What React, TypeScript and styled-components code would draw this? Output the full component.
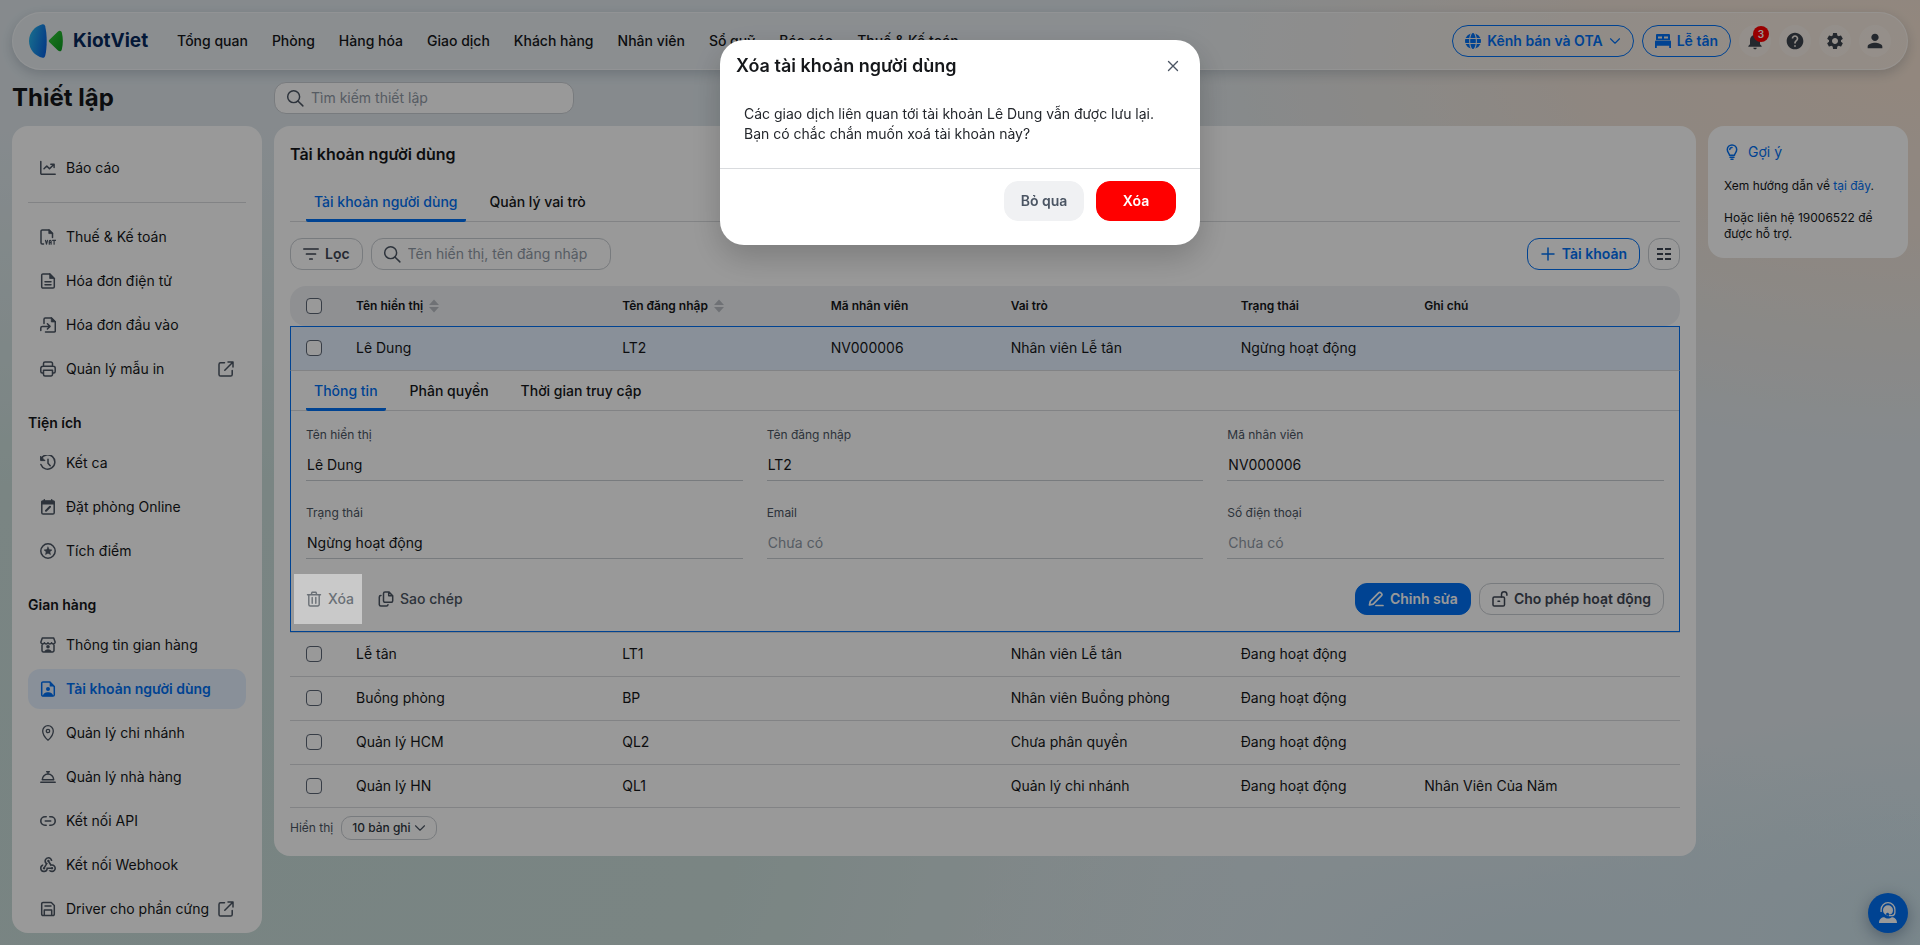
import React from "react";
import styled, { createGlobalStyle, css } from "styled-components";
import { MdHelp, MdNotifications, MdPerson, MdSettings, MdWebhook } from "react-icons/md";

const c = {
  blue: "#0070f4",
  blueSoft: "#e5f1ff",
  ink: "#15171a",
  body: "#4b5563",
  muted: "#9099a5",
  line: "#d9dbde",
  red: "#ff0000",
};

const GlobalStyle = createGlobalStyle`
  *, *::before, *::after { box-sizing: border-box; }
  body {
    margin: 0;
    font-family: Inter, "Noto Sans", sans-serif;
    font-size: 14px;
    line-height: 20px;
    color: ${c.ink};
    background-color: #dfe7ec;
    background-image:
      radial-gradient(ellipse 40% 42% at 100% 6%, #f4e2d2 0%, rgba(240, 225, 212, 0.85) 45%, rgba(228, 232, 233, 0) 100%),
      radial-gradient(ellipse 30% 22% at 80% 100%, #cfe1e8 0%, rgba(207, 225, 232, 0) 100%),
      radial-gradient(ellipse 22% 25% at 100% 100%, #c8e0e9 0%, rgba(200, 224, 233, 0) 100%),
      radial-gradient(ellipse 60% 75% at 8% 88%, #c9ddd9 0%, rgba(201, 221, 217, 0.9) 50%, rgba(223, 231, 236, 0) 100%);
    background-attachment: fixed;
  }
  button, input, select { font: inherit; color: inherit; }
  button { cursor: pointer; }
  h1, h2, h3, p { margin: 0; }
  svg { display: block; flex: none; }
`;

const Page = styled.div`
  display: flex;
  flex-direction: column;
  min-height: 100vh;
  padding: 12px;
`;

/* ---------- header ---------- */

const Header = styled.header`
  display: flex;
  align-items: center;
  height: 58px;
  padding: 0 16px;
  border: 1px solid rgba(255, 255, 255, 0.5);
  border-radius: 29px;
  background: rgba(255, 255, 255, 0.28);
  box-shadow: 0 4px 12px rgba(30, 50, 70, 0.2);
`;

const Brand = styled.a`
  display: flex;
  align-items: center;
  gap: 10px;
  margin-right: 17px;
  color: #06285c;
  font-size: 19px;
  font-weight: 700;
  text-decoration: none;
`;

const Nav = styled.nav`
  display: flex;
  flex: 1;
`;

const NavLink = styled.a`
  padding: 8px 12px;
  color: ${c.ink};
  font-weight: 500;
  text-decoration: none;
  white-space: nowrap;
`;

const HeaderActions = styled.div`
  display: flex;
  gap: 8px;
`;

const PillButton = styled.button`
  display: flex;
  align-items: center;
  gap: 6px;
  height: 32px;
  padding: 0 12px;
  border: 1px solid ${c.blue};
  border-radius: 16px;
  background: transparent;
  color: ${c.blue};
  font-weight: 600;
  white-space: nowrap;
`;

const RoundButton = styled.button`
  position: relative;
  display: flex;
  align-items: center;
  justify-content: center;
  width: 32px;
  height: 32px;
  padding: 0;
  border: 0;
  border-radius: 50%;
  background: rgba(255, 255, 255, 0.25);
  color: #3c434d;
`;

const Badge = styled.span`
  position: absolute;
  top: 1px;
  right: 2px;
  min-width: 16px;
  height: 16px;
  border-radius: 8px;
  background: ${c.red};
  color: #fff;
  font-size: 10px;
  font-weight: 600;
  line-height: 16px;
  text-align: center;
`;

/* ---------- page grid ---------- */

const Columns = styled.div`
  display: grid;
  grid-template-columns: 250px minmax(0, 1fr) 200px;
  column-gap: 12px;
  align-items: start;
`;

const TitleRow = styled(Columns)`
  align-items: center;
  height: 56px;
`;

const PageTitle = styled.h1`
  font-size: 24px;
  line-height: 32px;
  font-weight: 700;
`;

const SearchBox = styled.label<{ $width: number }>`
  display: flex;
  align-items: center;
  gap: 7px;
  width: ${(p) => p.$width}px;
  height: 32px;
  padding: 0 11px;
  border: 1px solid #c9cdd2;
  border-radius: 12px;
  background: #fff;
  color: ${c.body};

  input {
    flex: 1;
    min-width: 0;
    padding: 0;
    border: 0;
    outline: 0;
    background: none;
    color: ${c.ink};
  }
  input::placeholder { color: ${c.muted}; opacity: 1; }
`;

const Card = styled.section`
  border-radius: 16px;
  background: #fff;
`;

/* ---------- sidebar ---------- */

const Sidebar = styled(Card).attrs({ as: "aside" })`
  padding: 22px 16px 4px;
`;

const MenuGroup = styled.ul<{ $divided?: boolean }>`
  display: flex;
  flex-direction: column;
  gap: 4px;
  margin: 0;
  padding: 0;
  list-style: none;
  ${(p) =>
    p.$divided &&
    css`
      margin-top: 14px;
      padding-top: 14px;
      border-top: 1px solid ${c.line};
    `}
`;

const MenuHeading = styled.h3`
  margin-top: 14px;
  font-size: 14px;
  font-weight: 600;
  line-height: 40px;
`;

const MenuLink = styled.a<{ $active?: boolean }>`
  display: flex;
  align-items: center;
  gap: 10px;
  height: 40px;
  padding: 0 12px;
  border-radius: 12px;
  background: ${(p) => (p.$active ? c.blueSoft : "transparent")};
  color: ${(p) => (p.$active ? c.blue : c.ink)};
  font-weight: ${(p) => (p.$active ? 600 : 400)};
  text-decoration: none;
  white-space: nowrap;

  svg { color: ${(p) => (p.$active ? c.blue : c.body)}; }
  span { flex: 1; min-width: 0; }
`;

/* ---------- main panel ---------- */

const Panel = styled(Card).attrs({ as: "main" })`
  padding: 16px;
`;

const PanelTitle = styled.h2`
  font-size: 16px;
  font-weight: 600;
  line-height: 24px;
`;

const Tabs = styled.div<{ $inset?: boolean }>`
  display: flex;
  gap: 16px;
  height: 40px;
  margin-top: ${(p) => (p.$inset ? 0 : 16)}px;
  padding: 0 ${(p) => (p.$inset ? 15 : 16)}px;
  border-bottom: 1px solid ${c.line};
`;

const Tab = styled.button<{ $active?: boolean }>`
  height: 40px;
  padding: 3px 8px 0;
  border: 0;
  border-bottom: 3px solid ${(p) => (p.$active ? c.blue : "transparent")};
  border-radius: 2px;
  background: none;
  color: ${(p) => (p.$active ? c.blue : c.ink)};
  font-weight: 500;
`;

const Toolbar = styled.div`
  display: flex;
  gap: 8px;
  margin: 16px 0;
`;

const Spacer = styled.span`
  flex: 1;
`;

type Tone = "outline" | "blueOutline" | "primary" | "neutral" | "danger";

const tones = {
  outline: css`
    border-color: #c9cdd2;
    background: #fff;
    color: #3f4754;
  `,
  blueOutline: css`
    border-color: ${c.blue};
    background: #fff;
    color: ${c.blue};
  `,
  primary: css`
    border-color: ${c.blue};
    background: ${c.blue};
    color: #fff;
  `,
  neutral: css`
    border-color: #f0f1f3;
    background: #f0f1f3;
    color: #4b5563;
  `,
  danger: css`
    border-color: ${c.red};
    background: ${c.red};
    color: #fff;
  `,
};

const Button = styled.button<{ $tone: Tone; $large?: boolean }>`
  display: flex;
  align-items: center;
  justify-content: center;
  gap: 6px;
  min-width: ${(p) => (p.$large ? 80 : 32)}px;
  height: ${(p) => (p.$large ? 40 : 32)}px;
  padding: 0 12px;
  border: 1px solid;
  border-radius: ${(p) => (p.$large ? 14 : 12)}px;
  font-weight: 600;
  white-space: nowrap;
  ${(p) => tones[p.$tone]}
`;

const IconButton = styled(Button)`
  width: 32px;
  padding: 0;
`;

/* ---------- table ---------- */

const Table = styled.table`
  width: 100%;
  table-layout: fixed;
  border-collapse: separate;
  border-spacing: 0;
`;

const CheckCol = styled.col`
  width: 50px;
`;

const Col = styled.col<{ $share?: number }>`
  width: ${(p) => (p.$share ? `${p.$share}%` : "auto")};
`;

const HeadCell = styled.th`
  height: 40px;
  padding: 0 16px;
  background: #eff1f4;
  font-size: 12px;
  font-weight: 600;
  text-align: left;
  white-space: nowrap;

  &:first-child { border-radius: 16px 0 0 16px; }
  &:last-child { border-radius: 0 16px 16px 0; }
`;

const HeadLabel = styled.span`
  display: flex;
  align-items: center;
  gap: 6px;
`;

const BodyRow = styled.tr<{ $open?: boolean }>`
  td {
    height: 44px;
    padding: 0 16px 1px;
    border-bottom: 1px solid ${c.line};
    white-space: nowrap;
  }
  &:last-child td { height: 43px; padding-bottom: 0; }
  ${(p) =>
    p.$open &&
    css`
      td {
        height: 45px;
        padding-bottom: 2px;
        border-top: 1px solid ${c.blue};
        background: ${c.blueSoft};
      }
      td:first-child { border-left: 1px solid ${c.blue}; padding-left: 15px; }
      td:last-child { border-right: 1px solid ${c.blue}; }
    `}
`;

const DetailRow = styled.tr`
  & + tr td {
    height: 45px;
    padding-bottom: 2px;
    border-top: 1px solid ${c.line};
  }
`;

const DetailCell = styled.td`
  padding: 0;
  border: 1px solid ${c.blue};
  border-top: 0;
`;

const Checkbox = styled.input`
  display: block;
  appearance: none;
  width: 16px;
  height: 16px;
  margin: 0;
  border: 1px solid #5c6675;
  border-radius: 4px;
  background: #fff;
`;

const FieldGrid = styled.div`
  display: grid;
  grid-template-columns: repeat(3, minmax(0, 1fr));
  gap: 24px;
  padding: 16px 15px 24px;
`;

const Field = styled.div`
  display: flex;
  flex-direction: column;
  gap: 6px;

  label {
    color: ${c.body};
    font-size: 12px;
    line-height: 16px;
  }
  input {
    width: 100%;
    height: 32px;
    padding: 0 1px;
    border: 0;
    border-bottom: 1px solid #c9cdd2;
    outline: 0;
    background: none;
  }
  input::placeholder { color: ${c.muted}; opacity: 1; }
`;

const DetailActions = styled.div`
  display: flex;
  align-items: center;
  gap: 8px;
  padding: 0 15px 16px;
`;

const TextButton = styled.button<{ $spotlit?: boolean }>`
  position: relative;
  display: flex;
  align-items: center;
  gap: 6px;
  height: 32px;
  padding: 0;
  margin-right: 16px;
  border: 0;
  background: none;
  color: ${c.body};
  font-weight: 500;

  ${(p) =>
    p.$spotlit &&
    css`
      z-index: 20;
      color: #6a7076;

      &::before {
        content: "";
        position: absolute;
        z-index: -1;
        inset: -9px -8px -9px -12px;
        background: #c9c9c9;
      }
    `}
`;

const Pager = styled.div`
  display: flex;
  align-items: center;
  gap: 8px;
  margin-top: 8px;
  color: ${c.body};
  font-size: 12px;
`;

const SelectWrap = styled.span`
  display: grid;
  align-items: center;

  > * { grid-area: 1 / 1; }
  svg { justify-self: end; margin-right: 11px; pointer-events: none; }
`;

const Select = styled.select`
  appearance: none;
  width: 96px;
  height: 24px;
  padding: 0 10px;
  border: 1px solid #c9cdd2;
  border-radius: 10px;
  background: #fff;
  color: #2f3640;
  font-weight: 500;
`;

/* ---------- hints ---------- */

const Hints = styled(Card).attrs({ as: "aside" })`
  padding: 16px;
  font-size: 12px;
  line-height: 16px;

  p { margin-top: 16px; }
  a { color: ${c.blue}; text-decoration: none; }
`;

const HintsTitle = styled.h3`
  display: flex;
  align-items: center;
  gap: 8px;
  color: ${c.blue};
  font-size: 14px;
  font-weight: 400;
  line-height: 20px;
`;

/* ---------- floating ---------- */

const SupportButton = styled.button`
  position: fixed;
  right: 12px;
  bottom: 12px;
  display: flex;
  align-items: center;
  justify-content: center;
  width: 40px;
  height: 40px;
  padding: 0;
  border: 0;
  border-radius: 50%;
  background: ${c.blue};
  color: #fff;
  box-shadow: 0 4px 16px rgba(0, 30, 70, 0.35);
`;

const Backdrop = styled.div`
  position: fixed;
  z-index: 10;
  inset: 0;
  background: rgba(0, 0, 0, 0.4);
`;

const ModalLayer = styled.div`
  position: fixed;
  z-index: 30;
  top: 40px;
  left: 0;
  right: 0;
  display: flex;
  justify-content: center;
  pointer-events: none;
`;

const Modal = styled.div`
  width: 480px;
  border-radius: 24px;
  background: #fff;
  box-shadow: 0 12px 32px rgba(0, 0, 0, 0.2);
  pointer-events: auto;
`;

const ModalHeader = styled.div`
  display: flex;
  align-items: center;
  justify-content: space-between;
  padding: 12px 16px 0;

  h2 { font-size: 18px; line-height: 28px; font-weight: 600; }
`;

const CloseButton = styled.button`
  display: flex;
  align-items: center;
  justify-content: center;
  width: 22px;
  height: 22px;
  padding: 0;
  border: 0;
  background: none;
  color: ${c.body};
`;

const ModalBody = styled.div`
  padding: 24px;
  color: #24272c;
`;

const ModalFooter = styled.div`
  display: flex;
  justify-content: flex-end;
  gap: 12px;
  padding: 12px 24px 24px;
  border-top: 1px solid ${c.line};
`;

/* ---------- icons ---------- */

const Icon = ({ children, size = 16, w = 1.5 }: { children: React.ReactNode; size?: number; w?: number }) => (
  <svg width={size} height={size} viewBox="0 0 16 16" fill="none" stroke="currentColor" strokeWidth={w} strokeLinecap="round" strokeLinejoin="round" aria-hidden="true">
    {children}
  </svg>
);

const Logo = () => (
  <svg width="34" height="34" viewBox="0 0 34 34" aria-hidden="true">
    <defs>
      <linearGradient id="logoBlue" x1="0" y1="0.3" x2="1" y2="0.7">
        <stop offset="0" stopColor="#27b4ec" />
        <stop offset="1" stopColor="#0a63e0" />
      </linearGradient>
      <linearGradient id="logoGreen" x1="0" y1="0" x2="1" y2="1">
        <stop offset="0" stopColor="#35c83a" />
        <stop offset="1" stopColor="#0a9a1f" />
      </linearGradient>
    </defs>
    <path d="M13.6 0.2C15 0 15.8 0.8 16.2 2.2C18.2 11 18.2 23 16.2 31.8C15.8 33.2 15 34 13.6 33.8C6 32 0 25.5 0 17S6 2 13.6 0.2Z" fill="url(#logoBlue)" />
    <path d="M20.2 16L29 7.4C30.6 6 32.4 6.6 32.8 8.6C34.2 14 34.2 20 32.8 25.4C32.4 27.4 30.6 28 29 26.6L20.2 18Q19.4 17 20.2 16Z" fill="url(#logoGreen)" />
  </svg>
);

const GlobeIcon = () => (
  <svg width="16" height="16" viewBox="0 0 16 16" fill="currentColor" aria-hidden="true">
    <path d="M5.4 5h5.2C10.2 2.1 9.100 0 8 0S5.800 2.100 5.400 5ZM10.800 8c0-.7 0-1.400-.1-2H5.300a20 20 0 0 0 0 4h5.400c.1-.6.1-1.300.1-2ZM15.400 5A8 8 0 0 0 10.200.4c.7.9 1.200 2.600 1.500 4.600ZM5.800.4A8 8 0 0 0 .6 5h3.700C4.600 3 5.100 1.300 5.800.4ZM15.700 6h-3.900a22 22 0 0 1 0 4h3.900a8 8 0 0 0 0-4ZM4.200 8c0-.7 0-1.400.1-2H.3a8 8 0 0 0 0 4h4c-.1-.6-.1-1.300-.1-2ZM5.400 11c.4 2.900 1.500 5 2.600 5s2.200-2.100 2.600-5ZM10.200 15.600a8 8 0 0 0 5.200-4.600h-3.700c-.3 2-.8 3.700-1.500 4.600ZM.6 11a8 8 0 0 0 5.200 4.600C5.100 14.700 4.600 13 4.300 11Z" />
  </svg>
);

const BedIcon = () => (
  <svg width="16" height="16" viewBox="0 0 16 16" fill="currentColor" fillRule="evenodd" aria-hidden="true">
    <path d="M2 1h12a1 1 0 0 1 1 1v5H1V2a1 1 0 0 1 1-1ZM3 3.500v2h4v-2ZM9 3.500v2h4v-2ZM1 7.500h14a1 1 0 0 1 1 1V15h-1.800v-2.200H1.800V15H0V8.500a1 1 0 0 1 1-1Z" />
  </svg>
);
const ChevronIcon = () => (
  <Icon size={12}><path d="M2 5l6 6 6-6" /></Icon>
);
const SearchIcon = () => (
  <Icon size={18} w={1.3}><circle cx="6.800" cy="6.800" r="5.300" /><path d="M10.800 10.800L15 15" /></Icon>
);
const ExternalIcon = () => (
  <Icon><path d="M6.500 1.800H2.600a1.600 1.600 0 0 0-1.600 1.600v10a1.600 1.600 0 0 0 1.600 1.600h10a1.600 1.600 0 0 0 1.600-1.600V9.500M10 1h5v5M15 1L6.800 9.200" /></Icon>
);
const ReportIcon = () => (
  <Icon><path d="M.8 1.500v11.800a1 1 0 0 0 1 1h13.400M4 8.800L6.800 6l2.700 2.700L14 4.300M10.800 4.200h3.300v3.200" /></Icon>
);
const VatIcon = () => (
  <Icon>
    <path d="M3.500 15H2.300a1.300 1.300 0 0 1-1.300-1.300V2.200A1.300 1.300 0 0 1 2.300.9H9l3.500 3.500v4" />
    <path fill="currentColor" d="M8.800 1v3.600h3.600z" strokeWidth=".8" />
    <path strokeWidth="1.200" d="M5.500 11.300l1 3.800 1-3.800M9.300 15.200v-3q0-.9.9-.9t.9.900v3M9.300 13.500h1.800M12.600 11.300h3M14.100 11.300v3.900" />
  </Icon>
);
const DocIcon = () => (
  <Icon><path d="M9.700.9H3a1.300 1.300 0 0 0-1.300 1.300v11.600A1.300 1.300 0 0 0 3 15.100h10a1.300 1.300 0 0 0 1.300-1.300V5.500zM5 8.700h6M5 11.700h6" /><path fill="currentColor" d="M9.700.9v4.600h4.600z" strokeWidth=".8" /></Icon>
);
const DocInIcon = () => (
  <Icon><path d="M4 6.500V2.200A1.300 1.300 0 0 1 5.300.9h6l4 4v8.900a1.300 1.300 0 0 1-1.300 1.300H5.500M.8 13.500V11a1.600 1.600 0 0 1 1.600-1.600h7M7.400 6.800L10 9.400 7.400 12" /><path fill="currentColor" d="M11.300.9v4h4z" strokeWidth=".8" /></Icon>
);
const PrintIcon = () => (
  <Icon><path d="M3.500 5.300V2.500A1.500 1.500 0 0 1 5 1h6a1.500 1.500 0 0 1 1.500 1.500v2.800M3.500 12H2.300A1.500 1.500 0 0 1 .8 10.500V7.300a2 2 0 0 1 2-2h10.400a2 2 0 0 1 2 2v3.200a1.500 1.500 0 0 1-1.500 1.500h-1.200M3.500 9.300h9v4.200A1.500 1.500 0 0 1 11 15H5a1.500 1.500 0 0 1-1.500-1.500z" /></Icon>
);
const HistoryIcon = () => (
  <Icon><path d="M1.300 3.600A7.200 7.200 0 1 1 .9 9.500M8 4.300V8.300l2.200 2.500" /><path fill="currentColor" strokeWidth="1" d="M.6 1.600v4h4z" /></Icon>
);
const CalendarEditIcon = () => (
  <Icon><rect x="1.800" y="2" width="12.400" height="13" rx="1.300" /><path fill="currentColor" d="M2 2.500h12v2.300H2z" /><path d="M4.300.8v2M11.700.8v2" /><path d="M6 11.800l4-4" strokeWidth="2" /></Icon>
);
const StarCircleIcon = () => (
  <Icon><circle cx="8" cy="8" r="7.200" /><path fill="currentColor" strokeWidth=".5" d="M8 4l1.200 2.600 2.800.3-2.100 1.900.6 2.800L8 10.200l-2.500 1.400.6-2.800L4 6.900l2.800-.3z" /></Icon>
);
const StoreIcon = () => (
  <Icon><path d="M2.300.9h11.400l1.500 4.300a1.900 1.900 0 0 1-3.600.6 1.900 1.900 0 0 1-3.600 0 1.900 1.900 0 0 1-3.600 0 1.900 1.900 0 0 1-3.600-.6zM2 8v5.600A1.500 1.500 0 0 0 3.500 15h9a1.500 1.500 0 0 0 1.500-1.500V8" /><g fill="currentColor" stroke="none"><circle cx="8" cy="9.700" r="1.800" /><path d="M4.500 15c0-2 1.600-2.800 3.500-2.800s3.500.8 3.500 2.800z" /></g></Icon>
);
const UserDocIcon = () => (
  <Icon><path d="M9.700.9H3a1.300 1.300 0 0 0-1.300 1.300v11.600A1.300 1.300 0 0 0 3 15.100h10a1.300 1.300 0 0 0 1.300-1.300V5.500z" /><g fill="currentColor" stroke="none"><path d="M9.700.9v4.600h4.600z" /><circle cx="8" cy="8" r="2" /><path d="M3 15.200c0-3 2.200-4 5-4s5 1 5 4z" /></g></Icon>
);
const PinIcon = () => (
  <Icon w={1.3}><path d="M8 15.200S2.700 10.700 2.700 6a5.300 5.300 0 0 1 10.600 0c0 4.700-5.300 9.200-5.300 9.200z" /><circle cx="8" cy="6" r="1.700" /></Icon>
);
const BellDishIcon = () => (
  <Icon><path d="M.8 13.300h14.400M2.300 10.800a5.700 5.700 0 0 1 11.400 0zM8 5V2.800M6.700 2.700h2.600" /></Icon>
);
const LinkIcon = () => (
  <Icon w={1.600}><path d="M6.200 3.800H5a4.200 4.200 0 0 0 0 8.400h1.200M9.800 3.800H11a4.200 4.200 0 0 1 0 8.400H9.800M5.300 8h5.400" /></Icon>
);
const SaveIcon = () => (
  <Icon><path d="M11.300 1.500H3a1.300 1.300 0 0 0-1.300 1.300v10.400A1.300 1.300 0 0 0 3 14.500h10a1.300 1.300 0 0 0 1.300-1.300V4.500zM4.300 14.200V9h7.400v5.200M5 5h6" /></Icon>
);
const FilterIcon = () => (
  <Icon w={1.700}><path d="M.8 3h14.400M3.500 8h9M6.800 13h2.400" /></Icon>
);
const PlusIcon = () => (
  <Icon><path d="M8 2v12M2 8h12" /></Icon>
);
const ColumnsIcon = () => (
  <Icon w={1.800}><path strokeLinecap="butt" d="M1 3h6M9 3h6M1 8h6M9 8h6M1 13h6M9 13h6" /></Icon>
);
const TrashIcon = () => (
  <Icon w={1.400}><path d="M1.500 3.700h13M5.300 3.500L6 1.200h4l.7 2.300M2.800 3.800v9.700A1.500 1.500 0 0 0 4.300 15h7.400a1.500 1.500 0 0 0 1.500-1.500V3.800M6.200 6.500v5.700M9.800 6.500v5.700" /></Icon>
);
const CopyIcon = () => (
  <Icon><path d="M10.800.9H7a1.500 1.500 0 0 0-1.500 1.500v7.400A1.500 1.500 0 0 0 7 11.300h6.200a1.500 1.500 0 0 0 1.500-1.500v-5zM10.700 1v3.800h3.800M3 4.500h-.2a1.500 1.500 0 0 0-1.500 1.500v7.600A1.500 1.500 0 0 0 2.800 15h5.700a1.500 1.500 0 0 0 1.500-1.300" /></Icon>
);
const PencilIcon = () => (
  <Icon w={1.700}><path d="M1.500 14l.8-3.700 8.300-8.500a1.500 1.500 0 0 1 2.200 0l.7.7a1.500 1.500 0 0 1 0 2.200l-8.300 8.500zM8 14.500h7" /></Icon>
);
const UnlockIcon = () => (
  <Icon><rect x="1" y="6" width="11.500" height="9" rx="1.300" /><path d="M9.500 6V3.500a2.700 2.700 0 0 1 5.400 0v.8M6 10.300h1.600" /></Icon>
);
const BulbIcon = () => (
  <Icon><path d="M5.500 11.300c0-1.800-2.200-2.800-2.200-5.700a4.700 4.700 0 0 1 9.400 0c0 2.900-2.200 3.900-2.200 5.700zM5.800 5.600A2.200 2.200 0 0 1 8 3.400" /><path d="M6 13.200h4M7 15.200h2" /></Icon>
);
const CloseIcon = () => (
  <Icon size={12} w={1.800}><path d="M2 2l12 12M14 2L2 14" /></Icon>
);
const SupportIcon = () => (
  <svg width="20" height="22" viewBox="0 0 20 22" fill="currentColor" aria-hidden="true">
    <path d="M10 3.200a5 5 0 0 1 5 5c0 1.500-.6 2.900-1.600 3.900-.8.500-1.800.5-2.500.1a1.400 1.400 0 1 0-.6 1.100H10a5 5 0 0 1-5-5.100 5 5 0 0 1 5-5Z" />
    <path d="M3.100 10V7.600a6.900 6.900 0 0 1 13.800 0v2.800a3.500 3.500 0 0 1-3.500 3.300h-2.600" fill="none" stroke="currentColor" strokeWidth="1.300" />
    <path d="M1 21c0-4 2.600-5.800 5.300-5.800 1 .9 2.300 1.300 3.700 1.300s2.700-.4 3.700-1.300C16.400 15.200 19 17 19 21Z" />
  </svg>
);
const SortIcon = () => (
  <svg width="10" height="14" viewBox="0 0 10 14" fill="#b9bdc4" aria-hidden="true">
    <path d="M5 .5L10 6H0zM5 13.500L0 8h10z" />
  </svg>
);

/* ---------- data ---------- */

type MenuItem = { label: string; icon: React.ReactNode; active?: boolean; external?: boolean };

const reports: MenuItem[] = [{ label: "Báo cáo", icon: <ReportIcon /> }];
const accounting: MenuItem[] = [
  { label: "Thuế & Kế toán", icon: <VatIcon /> },
  { label: "Hóa đơn điện tử", icon: <DocIcon /> },
  { label: "Hóa đơn đầu vào", icon: <DocInIcon /> },
  { label: "Quản lý mẫu in", icon: <PrintIcon />, external: true },
];
const tools: MenuItem[] = [
  { label: "Kết ca", icon: <HistoryIcon /> },
  { label: "Đặt phòng Online", icon: <CalendarEditIcon /> },
  { label: "Tích điểm", icon: <StarCircleIcon /> },
];
const store: MenuItem[] = [
  { label: "Thông tin gian hàng", icon: <StoreIcon /> },
  { label: "Tài khoản người dùng", icon: <UserDocIcon />, active: true },
  { label: "Quản lý chi nhánh", icon: <PinIcon /> },
  { label: "Quản lý nhà hàng", icon: <BellDishIcon /> },
  { label: "Kết nối API", icon: <LinkIcon /> },
  { label: "Kết nối Webhook", icon: <MdWebhook size={16} viewBox="2 2 20 20" /> },
  { label: "Driver cho phần cứng", icon: <SaveIcon />, external: true },
];

const navItems = ["Tổng quan", "Phòng", "Hàng hóa", "Giao dịch", "Khách hàng", "Nhân viên", "Sổ quỹ", "Báo cáo", "Thuế & Kế toán"];

const headings = [
  { label: "Tên hiển thị", sortable: true },
  { label: "Tên đăng nhập", sortable: true },
  { label: "Mã nhân viên" },
  { label: "Vai trò" },
  { label: "Trạng thái" },
  { label: "Ghi chú" },
];

const selected = ["Lê Dung", "LT2", "NV000006", "Nhân viên Lễ tân", "Ngừng hoạt động", ""];
const rows = [
  ["Lễ tân", "LT1", "", "Nhân viên Lễ tân", "Đang hoạt động", ""],
  ["Buồng phòng", "BP", "", "Nhân viên Buồng phòng", "Đang hoạt động", ""],
  ["Quản lý HCM", "QL2", "", "Chưa phân quyền", "Đang hoạt động", ""],
  ["Quản lý HN", "QL1", "", "Quản lý chi nhánh", "Đang hoạt động", "Nhân Viên Của Năm"],
];

const fields = [
  { id: "displayName", label: "Tên hiển thị", value: "Lê Dung" },
  { id: "userName", label: "Tên đăng nhập", value: "LT2" },
  { id: "staffCode", label: "Mã nhân viên", value: "NV000006" },
  { id: "status", label: "Trạng thái", value: "Ngừng hoạt động" },
  { id: "email", label: "Email", value: "" },
  { id: "phone", label: "Số điện thoại", value: "" },
];

const Menu = ({ items, divided }: { items: MenuItem[]; divided?: boolean }) => (
  <MenuGroup $divided={divided}>
    {items.map((item) => (
      <li key={item.label}>
        <MenuLink href="#" $active={item.active}>
          {item.icon}
          <span>{item.label}</span>
          {item.external && <ExternalIcon />}
        </MenuLink>
      </li>
    ))}
  </MenuGroup>
);

const Row = ({ cells, open }: { cells: string[]; open?: boolean }) => (
  <BodyRow $open={open}>
    <td>
      <Checkbox type="checkbox" aria-label={`Chọn ${cells[0]}`} />
    </td>
    {cells.map((cell, i) => (
      <td key={i}>{cell}</td>
    ))}
  </BodyRow>
);

export default function App() {
  return (
    <>
      <GlobalStyle />
      <Page>
        <Header>
          <Brand href="#">
            <Logo />
            KiotViet
          </Brand>
          <Nav>
            {navItems.map((label) => (
              <NavLink key={label} href="#">{label}</NavLink>
            ))}
          </Nav>
          <HeaderActions>
            <PillButton><GlobeIcon />Kênh bán và OTA<ChevronIcon /></PillButton>
            <PillButton><BedIcon />Lễ tân</PillButton>
            <RoundButton aria-label="Thông báo"><MdNotifications size={20} /><Badge>3</Badge></RoundButton>
            <RoundButton aria-label="Trợ giúp"><MdHelp size={20} /></RoundButton>
            <RoundButton aria-label="Cài đặt"><MdSettings size={20} /></RoundButton>
            <RoundButton aria-label="Tài khoản"><MdPerson size={22} /></RoundButton>
          </HeaderActions>
        </Header>

        <TitleRow>
          <PageTitle>Thiết lập</PageTitle>
          <SearchBox $width={300}>
            <SearchIcon />
            <input type="text" placeholder="Tìm kiếm thiết lập" aria-label="Tìm kiếm thiết lập" />
          </SearchBox>
        </TitleRow>

        <Columns>
          <Sidebar>
            <Menu items={reports} />
            <Menu items={accounting} divided />
            <MenuHeading>Tiện ích</MenuHeading>
            <Menu items={tools} />
            <MenuHeading>Gian hàng</MenuHeading>
            <Menu items={store} />
          </Sidebar>

          <Panel>
            <PanelTitle>Tài khoản người dùng</PanelTitle>
            <Tabs>
              <Tab $active>Tài khoản người dùng</Tab>
              <Tab>Quản lý vai trò</Tab>
            </Tabs>

            <Toolbar>
              <Button $tone="outline"><FilterIcon />Lọc</Button>
              <SearchBox $width={240}>
                <SearchIcon />
                <input type="text" placeholder="Tên hiển thị, tên đăng nhập" aria-label="Tên hiển thị, tên đăng nhập" />
              </SearchBox>
              <Spacer />
              <Button $tone="blueOutline"><PlusIcon />Tài khoản</Button>
              <IconButton $tone="outline" aria-label="Hiển thị cột"><ColumnsIcon /></IconButton>
            </Toolbar>

            <Table>
              <colgroup>
                <CheckCol />
                <Col $share={19.15} />
                <Col $share={15} />
                <Col $share={12.95} />
                <Col $share={16.55} />
                <Col $share={13.2} />
                <Col />
              </colgroup>
              <thead>
                <tr>
                  <HeadCell><Checkbox type="checkbox" aria-label="Chọn tất cả" /></HeadCell>
                  {headings.map((h) => (
                    <HeadCell key={h.label}>
                      <HeadLabel>{h.label}{h.sortable && <SortIcon />}</HeadLabel>
                    </HeadCell>
                  ))}
                </tr>
              </thead>
              <tbody>
                <Row cells={selected} open />
                <DetailRow>
                  <DetailCell colSpan={7}>
                    <Tabs $inset>
                      <Tab $active>Thông tin</Tab>
                      <Tab>Phân quyền</Tab>
                      <Tab>Thời gian truy cập</Tab>
                    </Tabs>
                    <FieldGrid>
                      {fields.map((f) => (
                        <Field key={f.id}>
                          <label htmlFor={f.id}>{f.label}</label>
                          <input id={f.id} type="text" defaultValue={f.value} placeholder="Chưa có" readOnly />
                        </Field>
                      ))}
                    </FieldGrid>
                    <DetailActions>
                      <TextButton $spotlit><TrashIcon />Xóa</TextButton>
                      <TextButton><CopyIcon />Sao chép</TextButton>
                      <Spacer />
                      <Button $tone="primary"><PencilIcon />Chỉnh sửa</Button>
                      <Button $tone="outline"><UnlockIcon />Cho phép hoạt động</Button>
                    </DetailActions>
                  </DetailCell>
                </DetailRow>
                {rows.map((cells) => (
                  <Row key={cells[0]} cells={cells} />
                ))}
              </tbody>
            </Table>

            <Pager>
              <label htmlFor="pageSize">Hiển thị</label>
              <SelectWrap>
                <Select id="pageSize" defaultValue="10">
                  <option value="10">10 bản ghi</option>
                  <option value="20">20 bản ghi</option>
                </Select>
                <ChevronIcon />
              </SelectWrap>
            </Pager>
          </Panel>

          <Hints>
            <HintsTitle><BulbIcon />Gợi ý</HintsTitle>
            <p>Xem hướng dẫn về <a href="#">tại đây</a>.</p>
            <p>Hoặc liên hệ 19006522 để được hỗ trợ.</p>
          </Hints>
        </Columns>
      </Page>

      <SupportButton aria-label="Hỗ trợ"><SupportIcon /></SupportButton>

      <Backdrop />
      <ModalLayer>
        <Modal role="dialog" aria-modal="true" aria-labelledby="dialogTitle">
          <ModalHeader>
            <h2 id="dialogTitle">Xóa tài khoản người dùng</h2>
            <CloseButton aria-label="Đóng"><CloseIcon /></CloseButton>
          </ModalHeader>
          <ModalBody>
            <p>Các giao dịch liên quan tới tài khoản Lê Dung vẫn được lưu lại.</p>
            <p>Bạn có chắc chắn muốn xoá tài khoản này?</p>
          </ModalBody>
          <ModalFooter>
            <Button $tone="neutral" $large>Bỏ qua</Button>
            <Button $tone="danger" $large>Xóa</Button>
          </ModalFooter>
        </Modal>
      </ModalLayer>
    </>
  );
}
